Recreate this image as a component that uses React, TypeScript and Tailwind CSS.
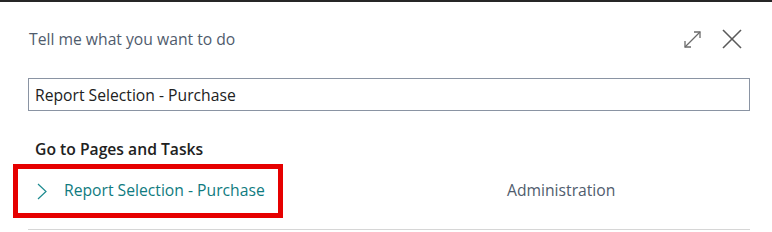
export default function App() {
  return (
    <div className="h-[232px] w-[772px] overflow-hidden border-t-2 border-[#262626] bg-white font-['Open_Sans',sans-serif]">
      {/* Header */}
      <div className="flex h-[76px] items-start justify-between pl-[29px] pr-[30px] pt-[26px]">
        <h1 className="text-[15.7px] leading-[22px] text-[#505c6d]">Tell me what you want to do</h1>
        <div className="flex items-center gap-[20px] pt-[1px]">
          <svg width="19" height="19" viewBox="0 0 19 19" fill="none" stroke="#6b6b6b" strokeWidth="1.3">
            <path d="M2 17 L17 2" />
            <path d="M11 2 H17 V8" />
            <path d="M2 11 V17 H8" />
          </svg>
          <svg width="20" height="20" viewBox="0 0 20 20" fill="none" stroke="#5a5a5a" strokeWidth="1.6">
            <path d="M1 1 L19 19" />
            <path d="M19 1 L1 19" />
          </svg>
        </div>
      </div>

      {/* Search input */}
      <div className="pl-[28px] pr-[22px]">
        <input
          readOnly
          value="Report Selection - Purchase"
          className="h-[33px] w-full border border-[#8a94a3] px-[6px] text-[15.7px] text-[#212121] outline-none"
        />
      </div>

      {/* Results */}
      <div className="pl-[35px] pt-[28px]">
        <h2 className="text-[15.7px] font-semibold leading-[20px] text-[#212121]">Go to Pages and Tasks</h2>
      </div>
      <div className="ml-[28px] mr-[22px] mt-[4px] flex h-[67px] items-center border-b border-[#d6d6d6] pb-[10px]">
        <div className="-ml-[15px] flex h-[54px] w-[270px] items-center border-[5px] border-[#e60000] pl-[19px]">
          <svg width="10" height="17" viewBox="0 0 10 17" fill="none" stroke="#1c8a8f" strokeWidth="1.2">
            <path d="M1 1 L9 8.5 L1 16" />
          </svg>
          <span className="ml-[17px] text-[15.7px] text-[#0f7b80]">Report Selection - Purchase</span>
        </div>
        <span className="ml-[224px] text-[15.7px] text-[#505c6d]">Administration</span>
      </div>
    </div>
  );
}
